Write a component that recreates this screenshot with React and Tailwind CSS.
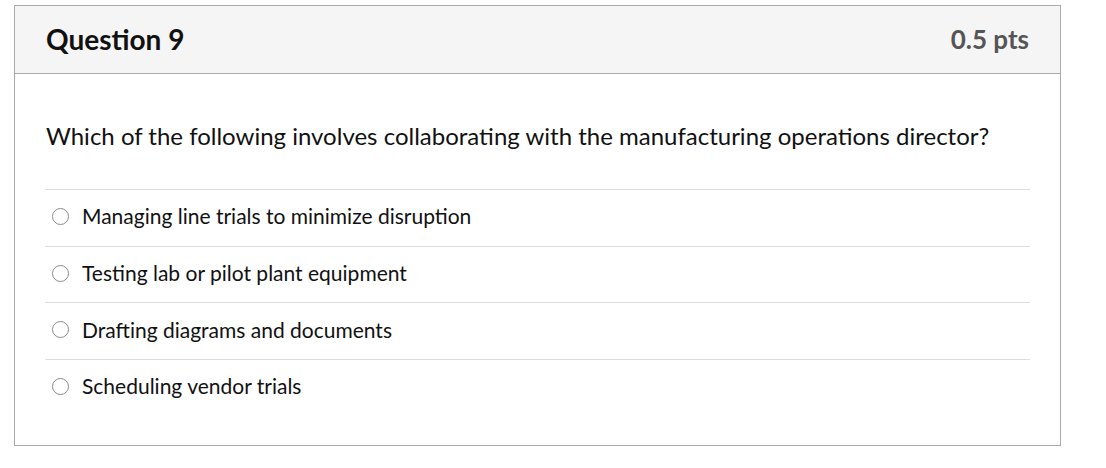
const answers = [
  "Managing line trials to minimize disruption",
  "Testing lab or pilot plant equipment",
  "Drafting diagrams and documents",
  "Scheduling vendor trials",
];

export default function App() {
  return (
    <div className="min-h-[468px] bg-white pl-[14px] pt-[5px] font-['Lato',sans-serif]">
      <div className="w-[1047px] border border-[#aaaaaa]">
        {/* Header */}
        <div className="flex h-[68px] items-center justify-between border-b border-[#aaaaaa] bg-[#f5f5f5] px-[31px] pb-[2px]">
          <h2 className="text-[28px] font-bold leading-[34px] text-[#111]">Question 9</h2>
          <span className="text-[26px] font-bold leading-[34px] text-[#555]">0.5 pts</span>
        </div>

        {/* Body */}
        <div className="px-[30px] pb-[29px] pt-[47px]">
          <p className="pl-[1px] text-[24px] leading-[30px] text-[#111]">
            Which of the following involves collaborating with the manufacturing operations director?
          </p>
          <div className="mt-[38px]">
            {answers.map((a) => (
              <label
                key={a}
                className="flex h-[56.7px] items-center gap-[13px] border-t border-[#dddddd] pb-[3px] pl-[7px]"
              >
                <input
                  type="radio"
                  name="q9"
                  className="h-[17px] w-[17px] shrink-0 appearance-none rounded-full border border-[#8a8a8a] bg-white"
                />
                <span className="text-[21px] leading-[26px] text-[#111]">{a}</span>
              </label>
            ))}
          </div>
        </div>
      </div>
    </div>
  );
}
